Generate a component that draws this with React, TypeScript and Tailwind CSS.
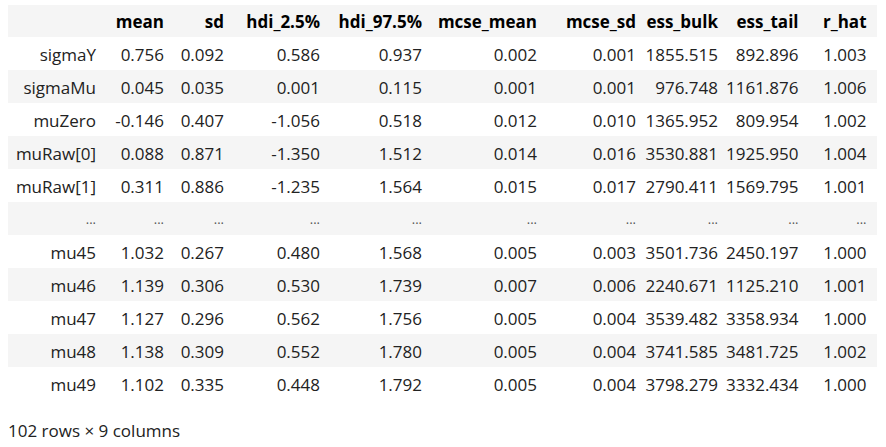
const columns = [
  { key: "mean", width: "w-[68px]" },
  { key: "sd", width: "w-[60px]" },
  { key: "hdi_2.5%", width: "w-[96px]" },
  { key: "hdi_97.5%", width: "w-[102px]" },
  { key: "mcse_mean", width: "w-[115px]" },
  { key: "mcse_sd", width: "w-[99px]" },
  { key: "ess_bulk", width: "w-[82px]" },
  { key: "ess_tail", width: "w-[80px]" },
  { key: "r_hat", width: "w-[70px]" },
];

const rows: [string, string[]][] = [
  ["sigmaY", ["0.756", "0.092", "0.586", "0.937", "0.002", "0.001", "1855.515", "892.896", "1.003"]],
  ["sigmaMu", ["0.045", "0.035", "0.001", "0.115", "0.001", "0.001", "976.748", "1161.876", "1.006"]],
  ["muZero", ["-0.146", "0.407", "-1.056", "0.518", "0.012", "0.010", "1365.952", "809.954", "1.002"]],
  ["muRaw[0]", ["0.088", "0.871", "-1.350", "1.512", "0.014", "0.016", "3530.881", "1925.950", "1.004"]],
  ["muRaw[1]", ["0.311", "0.886", "-1.235", "1.564", "0.015", "0.017", "2790.411", "1569.795", "1.001"]],
  ["...", ["...", "...", "...", "...", "...", "...", "...", "...", "..."]],
  ["mu45", ["1.032", "0.267", "0.480", "1.568", "0.005", "0.003", "3501.736", "2450.197", "1.000"]],
  ["mu46", ["1.139", "0.306", "0.530", "1.739", "0.007", "0.006", "2240.671", "1125.210", "1.001"]],
  ["mu47", ["1.127", "0.296", "0.562", "1.756", "0.005", "0.004", "3539.482", "3358.934", "1.000"]],
  ["mu48", ["1.138", "0.309", "0.552", "1.780", "0.005", "0.004", "3741.585", "3481.725", "1.002"]],
  ["mu49", ["1.102", "0.335", "0.448", "1.792", "0.005", "0.004", "3798.279", "3332.434", "1.000"]],
];

// pandas-style ellipsis cells are drawn smaller and lighter
const ellipsis = "text-[13px] text-[#555]";

export default function App() {
  return (
    <div className="min-h-screen bg-white pl-2 pt-[5px] font-['Open_Sans',sans-serif] text-[17px] text-[#222]">
      <table className="table-fixed border-collapse">
        <thead>
          <tr className="h-[32px] bg-[#f5f5f5]">
            <th className="w-[96px]" />
            {columns.map((col, i) => (
              <th
                key={col.key}
                className={`${col.width} ${i === columns.length - 1 ? "pr-[10px]" : "pr-2"} text-right font-bold leading-none text-black`}
              >
                {col.key}
              </th>
            ))}
          </tr>
        </thead>
        <tbody>
          {rows.map(([name, values], r) => (
            <tr key={name} className={r % 2 === 1 ? "h-[33px] bg-[#f5f5f5]" : "h-[33px]"}>
              <th className={`pr-2 pt-px text-right font-normal leading-none ${name === "..." ? ellipsis : ""}`}>{name}</th>
              {values.map((v, i) => (
                <td
                  key={i}
                  className={`${i === values.length - 1 ? "pr-[10px]" : "pr-2"} pt-px text-right leading-none ${v === "..." ? ellipsis : ""}`}
                >
                  {v}
                </td>
              ))}
            </tr>
          ))}
        </tbody>
      </table>
      <p className="mt-[20px] leading-[22px]">102 rows × 9 columns</p>
    </div>
  );
}
